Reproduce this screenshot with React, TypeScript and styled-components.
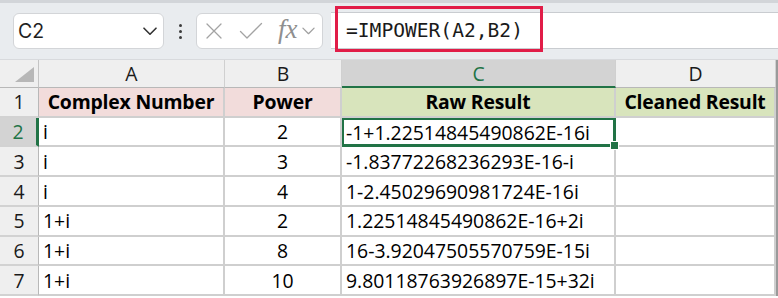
import React from 'react';
import styled, { createGlobalStyle, css } from 'styled-components';

const GREEN = '#217346';

const GlobalStyle = createGlobalStyle`
  html, body { margin: 0; padding: 0; background: #ffffff; }
  body { width: 778px; height: 298px; overflow: hidden; }
`;

const Page = styled.div`
  width: 778px;
  height: 298px;
  overflow: hidden;
  background: #ffffff;
`;

const FormulaBar = styled.div`
  box-sizing: border-box;
  height: 60px;
  display: flex;
  align-items: flex-start;
  padding: 10px 0 0 13px;
  background: #e9ecef;
  border-top: 3px solid #d2d5d9;
  border-bottom: 1px solid #d8dadd;
`;

const RoundBox = styled.div`
  box-sizing: border-box;
  height: 36px;
  background: #ffffff;
  border: 1px solid #d3d5d8;
  border-radius: 6px;
  display: flex;
  align-items: center;
`;

const NameBox = styled(RoundBox)`
  width: 151px;
  padding: 0 6px 0 4px;
  justify-content: space-between;
  font-family: Inter, 'Noto Sans', sans-serif;
  font-size: 19.5px;
  color: #1f1f1f;
`;

const Dots = styled.div`
  width: 32px;
  height: 36px;
  display: flex;
  flex-direction: column;
  align-items: center;
  justify-content: center;
  gap: 3px;
  span {
    width: 3px;
    height: 3px;
    border-radius: 50%;
    background: #3c3c3c;
  }
`;

const FuncBox = styled(RoundBox)`
  width: 127px;
  padding: 0 0 0 8px;
  color: #9b9b9b;
`;

const FxText = styled.span`
  font-family: 'Liberation Serif', 'DejaVu Serif', serif;
  font-style: italic;
  font-size: 27px;
  line-height: 1;
  color: #8f8f8f;
  margin: 0 4px 3px 15px;
`;

const FormulaInput = styled.div`
  position: relative;
  box-sizing: border-box;
  flex: 1;
  height: 37px;
  margin: -1px 0 0 8px;
  background: #ffffff;
  border-top: 1px solid #c9ccd0;
  border-bottom: 1px solid #c9ccd0;
  display: flex;
  align-items: center;
  padding-left: 15px;
  font-family: 'DejaVu Sans Mono', 'Liberation Mono', monospace;
  font-size: 19.6px;
  color: #1a1a1a;
`;

const Highlight = styled.div`
  position: absolute;
  left: 4px;
  top: -7px;
  width: 208px;
  height: 46px;
  box-sizing: border-box;
  border: 3px solid #e11d48;
  pointer-events: none;
`;

const Sheet = styled.div`
  display: grid;
  grid-template-columns: 39px 186px 117px 274px 160px 1fr;
  grid-template-rows: 28px repeat(7, 29.72px);
  font-family: 'Open Sans', 'Noto Sans', sans-serif;
  font-size: 19.4px;
  color: #000000;
`;

const Corner = styled.div`
  position: relative;
  background: #efefef;
  border-right: 1px solid #c4c4c4;
  border-bottom: 1px solid #b8b8b8;
  &::after {
    content: '';
    position: absolute;
    right: 4px;
    bottom: 5px;
    width: 0;
    height: 0;
    border-left: 19px solid transparent;
    border-bottom: 15px solid #b7b7b7;
  }
`;

const ColHead = styled.div<{ $active?: boolean }>`
  box-sizing: border-box;
  display: flex;
  align-items: center;
  justify-content: center;
  background: #efefef;
  border-right: 1px solid #d0d0d0;
  border-bottom: 1px solid #b8b8b8;
  color: #1a1a1a;
  ${(p) =>
    p.$active &&
    css`
      background: #d3d3d3;
      color: ${GREEN};
      border-bottom: 2px solid ${GREEN};
    `}
`;

const RowHead = styled.div<{ $active?: boolean }>`
  box-sizing: border-box;
  display: flex;
  align-items: center;
  justify-content: center;
  background: #efefef;
  border-right: 1px solid #b8b8b8;
  border-bottom: 2px solid #d2d2d2;
  color: #1a1a1a;
  ${(p) =>
    p.$active &&
    css`
      background: #d3d3d3;
      color: ${GREEN};
      border-right: 3px solid ${GREEN};
    `}
`;

const Cell = styled.div<{ $fill?: string; $align?: string; $bold?: boolean; $active?: boolean }>`
  position: relative;
  box-sizing: border-box;
  display: flex;
  align-items: center;
  justify-content: ${(p) => p.$align || 'flex-start'};
  padding: 0 4px 0 4px;
  white-space: nowrap;
  background: ${(p) => p.$fill || '#ffffff'};
  font-weight: ${(p) => (p.$bold ? 700 : 400)};
  letter-spacing: ${(p) => (p.$bold ? '-0.2px' : '0')};
  border-right: 2px solid #cfcfcf;
  border-bottom: 2px solid #cfcfcf;
  ${(p) =>
    p.$active &&
    css`
      border: 2px solid ${GREEN};
      border-right-width: 3px;
      border-bottom-width: 3px;
      padding-left: 2px;
      &::after {
        content: '';
        position: absolute;
        right: -6px;
        bottom: -6px;
        width: 7px;
        height: 7px;
        background: ${GREEN};
        border: 1px solid #ffffff;
        z-index: 2;
      }
    `}
`;

const Edge = styled.div`
  border-left: 2px solid #9a9a9a;
  background: #ffffff;
`;

const Chevron = ({ size = 14, color = '#333', width = 1.6 }: { size?: number; color?: string; width?: number }) => (
  <svg width={size} height={size * 0.6} viewBox="0 0 14 8" fill="none">
    <path d="M1 1l6 6 6-6" stroke={color} strokeWidth={width} strokeLinecap="round" strokeLinejoin="round" />
  </svg>
);

const CancelIcon = () => (
  <svg width="18" height="18" viewBox="0 0 18 18" fill="none">
    <path d="M2 2l14 14M16 2L2 16" stroke="#a3a3a3" strokeWidth="1.3" strokeLinecap="round" />
  </svg>
);

const EnterIcon = () => (
  <svg width="24" height="18" viewBox="0 0 24 18" fill="none" style={{ marginLeft: 16 }}>
    <path d="M1.5 9.5l6.5 6.5L22.5 1.5" stroke="#a3a3a3" strokeWidth="1.3" strokeLinecap="round" strokeLinejoin="round" />
  </svg>
);

const headers = ['A', 'B', 'C', 'D'];

const rows = [
  ['i', '2', '-1+1.22514845490862E-16i'],
  ['i', '3', '-1.83772268236293E-16-i'],
  ['i', '4', '1-2.45029690981724E-16i'],
  ['1+i', '2', '1.22514845490862E-16+2i'],
  ['1+i', '8', '16-3.92047505570759E-15i'],
  ['1+i', '10', '9.80118763926897E-15+32i'],
];

const PINK = '#f2dcdb';
const LIME = '#d8e4bc';

export default function App() {
  return (
    <Page>
      <GlobalStyle />
      <FormulaBar>
        <NameBox>
          <span>C2</span>
          <Chevron />
        </NameBox>
        <Dots>
          <span />
          <span />
          <span />
        </Dots>
        <FuncBox>
          <CancelIcon />
          <EnterIcon />
          <FxText>fx</FxText>
          <Chevron size={13} color="#a0a0a0" width={1.4} />
        </FuncBox>
        <FormulaInput>
          =IMPOWER(A2,B2)
          <Highlight />
        </FormulaInput>
      </FormulaBar>
      <Sheet>
        <Corner />
        {headers.map((h) => (
          <ColHead key={h} $active={h === 'C'}>
            {h}
          </ColHead>
        ))}
        <Edge />

        <RowHead>1</RowHead>
        <Cell $fill={PINK} $align="center" $bold>Complex Number</Cell>
        <Cell $fill={PINK} $align="center" $bold>Power</Cell>
        <Cell $fill={LIME} $align="center" $bold>Raw Result</Cell>
        <Cell $fill={LIME} $align="center" $bold>Cleaned Result</Cell>
        <Edge />

        {rows.map((r, i) => (
          <React.Fragment key={i}>
            <RowHead $active={i === 0}>{i + 2}</RowHead>
            <Cell>{r[0]}</Cell>
            <Cell $align="center">{r[1]}</Cell>
            <Cell $active={i === 0}>{r[2]}</Cell>
            <Cell />
            <Edge />
          </React.Fragment>
        ))}
      </Sheet>
    </Page>
  );
}
